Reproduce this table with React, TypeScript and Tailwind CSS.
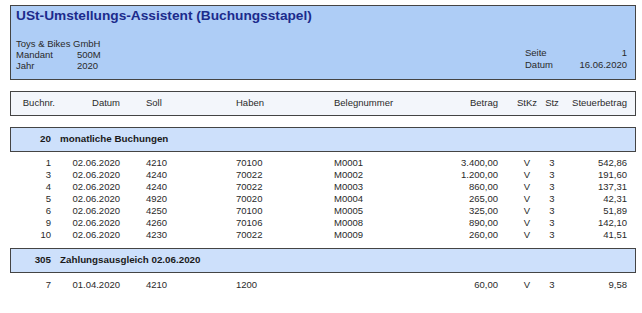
import React from "react";

type Row = [string, string, string, string, string, string, string, string, string];

const group1: Row[] = [
  ["1", "02.06.2020", "4210", "70100", "M0001", "3.400,00", "V", "3", "542,86"],
  ["3", "02.06.2020", "4240", "70022", "M0002", "1.200,00", "V", "3", "191,60"],
  ["4", "02.06.2020", "4240", "70022", "M0003", "860,00", "V", "3", "137,31"],
  ["5", "02.06.2020", "4920", "70020", "M0004", "265,00", "V", "3", "42,31"],
  ["6", "02.06.2020", "4250", "70100", "M0005", "325,00", "V", "3", "51,89"],
  ["9", "02.06.2020", "4260", "70106", "M0008", "890,00", "V", "3", "142,10"],
  ["10", "02.06.2020", "4230", "70022", "M0009", "260,00", "V", "3", "41,51"],
];

const group2: Row[] = [["7", "01.04.2020", "4210", "1200", "", "60,00", "V", "3", "9,58"]];

function Cells({ r, header }: { r: Row; header?: boolean }) {
  return (
    <>
      <div className={header ? "w-[55px] shrink-0 text-right" : "w-[55px] shrink-0 text-right pr-[4px]"}>{r[0]}</div>
      <div className="w-[65px] shrink-0 text-right">{r[1]}</div>
      <div className="w-[116px] shrink-0 pl-[26px]">{r[2]}</div>
      <div className="w-[98px] shrink-0">{r[3]}</div>
      <div className="w-[106px] shrink-0">{r[4]}</div>
      <div className="w-[58px] shrink-0 text-right">{r[5]}</div>
      <div className="w-[12px] shrink-0" />
      <div className="w-[34px] shrink-0 text-center">{r[6]}</div>
      <div className="w-[16px] shrink-0 text-center">{r[7]}</div>
      <div className="w-[67px] shrink-0 text-right">{r[8]}</div>
    </>
  );
}

function DataRow({ r }: { r: Row }) {
  return (
    <div className="flex h-[12px] items-center leading-[12px] whitespace-nowrap">
      <Cells r={r} />
    </div>
  );
}

function GroupBar({ num, title }: { num: string; title: string }) {
  return (
    <div className="ml-[10px] w-[626px] h-[25px] border border-[#444] bg-[#cde0fb] flex items-center font-bold text-[9.8px] text-[#1a1a1a] whitespace-nowrap">
      <div className="w-[40px] text-right shrink-0">{num}</div>
      <div className="ml-[9px]">{title}</div>
    </div>
  );
}

export default function App() {
  return (
    <div
      className="w-[642px] h-[313px] bg-white overflow-hidden text-[9.5px] text-[#2a2a2a] pt-[5px]"
      style={{ fontFamily: '"Liberation Sans", Arial, sans-serif' }}
    >
      {/* Report header */}
      <div className="ml-[10px] w-[626px] h-[75px] border border-[#444] bg-[#aecdf6] pt-[2px] pl-[5px] pr-[8px] flex flex-col">
        <div className="text-[13.7px] leading-[16px] font-bold text-[#1c2b8c] whitespace-nowrap">
          USt-Umstellungs-Assistent (Buchungsstapel)
        </div>
        <div className="flex justify-between items-end mt-[14px]">
          <div className="leading-[11px] whitespace-nowrap">
            <div>Toys &amp; Bikes GmbH</div>
            <div className="flex">
              <span className="w-[61px]">Mandant</span>
              <span>500M</span>
            </div>
            <div className="flex">
              <span className="w-[61px]">Jahr</span>
              <span>2020</span>
            </div>
          </div>
          <div className="w-[102px] leading-[12px] whitespace-nowrap">
            <div className="flex justify-between">
              <span>Seite</span>
              <span>1</span>
            </div>
            <div className="flex justify-between">
              <span>Datum</span>
              <span>16.06.2020</span>
            </div>
          </div>
        </div>
      </div>

      {/* Column header */}
      <div className="mt-[11px] ml-[10px] w-[626px] h-[25px] border border-[#444] bg-[#f3f6fb] flex items-center whitespace-nowrap">
        <div className="flex -ml-[11px]">
          <Cells
            header
            r={["Buchnr.", "Datum", "Soll", "Haben", "Belegnummer", "Betrag", "StKz", "Stz", "Steuerbetrag"]}
          />
        </div>
      </div>

      <div className="mt-[11px]">
        <GroupBar num="20" title="monatliche Buchungen" />
      </div>
      <div className="mt-[5px]">
        {group1.map((r, i) => (
          <DataRow key={i} r={r} />
        ))}
      </div>
      <div className="mt-[7px]">
        <GroupBar num="305" title="Zahlungsausgleich 02.06.2020" />
      </div>
      <div className="mt-[6px]">
        {group2.map((r, i) => (
          <DataRow key={i} r={r} />
        ))}
      </div>
    </div>
  );
}
